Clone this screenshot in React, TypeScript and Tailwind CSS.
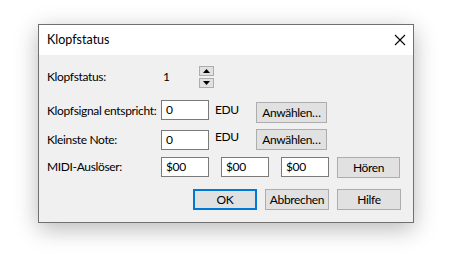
import React from "react";

const font = { fontFamily: 'Lato, "Noto Sans", sans-serif' };

function Field({ value, className = "" }: { value: string; className?: string }) {
  return (
    <div
      className={`flex h-[20px] w-[48px] items-center border border-[#7a7a7a] bg-white pl-[4px] text-[12px] leading-none ${className}`}
    >
      {value}
    </div>
  );
}

function Button({
  children,
  className = "",
  primary = false,
}: {
  children: React.ReactNode;
  className?: string;
  primary?: boolean;
}) {
  return (
    <div
      className={`flex h-[21px] items-center justify-center bg-[#e1e1e1] text-[12px] leading-none ${
        primary ? "border-2 border-[#0078d7]" : "border border-[#adadad]"
      } ${className}`}
    >
      {children}
    </div>
  );
}

function Spinner() {
  return (
    <div className="flex flex-col gap-[2px]">
      <div className="flex h-[10px] w-[15px] items-center justify-center border border-[#adadad] bg-[#e1e1e1]">
        <svg width="7" height="4" viewBox="0 0 7 4">
          <path d="M0 4 L3.5 0 L7 4 Z" fill="#000" />
        </svg>
      </div>
      <div className="flex h-[10px] w-[15px] items-center justify-center border border-[#adadad] bg-[#e1e1e1]">
        <svg width="7" height="4" viewBox="0 0 7 4">
          <path d="M0 0 L7 0 L3.5 4 Z" fill="#000" />
        </svg>
      </div>
    </div>
  );
}

export default function App() {
  return (
    <div className="h-[261px] w-[459px] bg-white pl-[38px] pt-[24px] text-black" style={font}>
      <div className="flex h-[199px] w-[376px] flex-col border border-[#707070] bg-[#f0f0f0] shadow-[0_6px_22px_rgba(0,0,0,0.28)]">
        <div className="flex h-[30px] shrink-0 items-center justify-between bg-white pl-[8px] pr-[7px]">
          <span className="text-[12.5px]">Klopfstatus</span>
          <svg width="12" height="12" viewBox="0 0 12 12">
            <path d="M1 1 L11 11 M11 1 L1 11" stroke="#000" strokeWidth="1.1" />
          </svg>
        </div>

        <div className="flex flex-col whitespace-nowrap pl-[8px] text-[12px] leading-[18px] tracking-[-0.35px]">
          {/* Klopfstatus */}
          <div className="mt-[11px] flex h-[21px] items-center">
            <span className="w-[114px]">Klopfstatus:</span>
            <span className="w-[38px] pl-[2px]">1</span>
            <Spinner />
          </div>

          {/* Klopfsignal */}
          <div className="mt-[13px] flex h-[23px] items-start">
            <span className="flex h-[21px] w-[114px] items-center">Klopfsignal entspricht:</span>
            <Field value="0" />
            <span className="ml-[6px] mt-[1px] w-[41px]">EDU</span>
            <Button className="mt-[2px] w-[71px]">Anwählen…</Button>
          </div>

          {/* Kleinste Note */}
          <div className="mt-[6px] flex h-[21px] items-start">
            <span className="flex h-[21px] w-[114px] items-center">Kleinste Note:</span>
            <Field value="0" className="mt-[1px] h-[19px]" />
            <span className="ml-[6px] -mt-[1px] w-[41px]">EDU</span>
            <Button className="w-[71px]">Anwählen…</Button>
          </div>

          {/* MIDI */}
          <div className="mt-[7px] flex h-[21px] items-start">
            <span className="flex h-[20px] w-[114px] items-center">MIDI-Auslöser:</span>
            <Field value="$00" className="h-[19px]" />
            <Field value="$00" className="ml-[12px] h-[19px]" />
            <Field value="$00" className="ml-[12px] h-[19px]" />
            <Button className="ml-[8px] w-[63px]">Hören</Button>
          </div>

          {/* Buttons */}
          <div className="mt-[11px] flex pl-[146px]">
            <Button primary className="w-[64px]">OK</Button>
            <Button className="ml-[8px] w-[64px]">Abbrechen</Button>
            <Button className="ml-[8px] w-[64px]">Hilfe</Button>
          </div>
        </div>
      </div>
    </div>
  );
}
